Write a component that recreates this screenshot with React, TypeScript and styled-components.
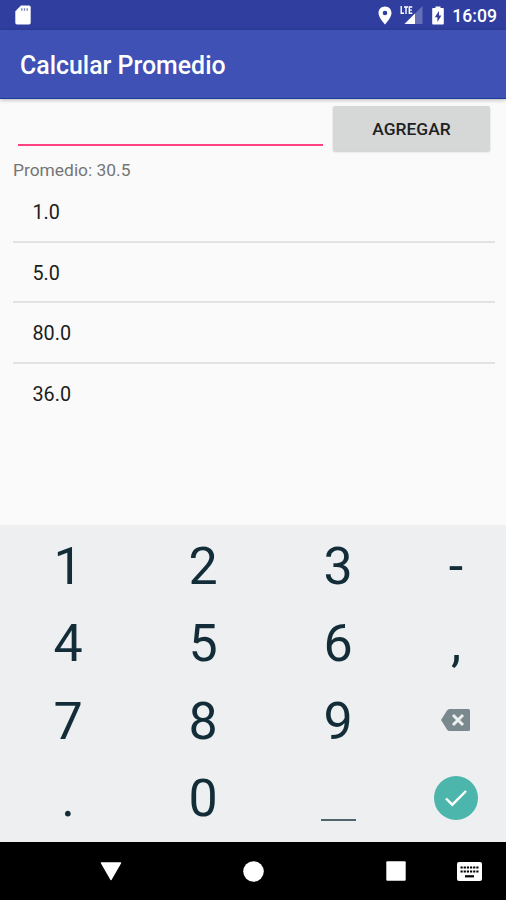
import React from "react";
import styled, { createGlobalStyle } from "styled-components";

const GlobalStyle = createGlobalStyle`
  * { box-sizing: border-box; }
  html, body { margin: 0; padding: 0; }
  body { font-family: Roboto, "Noto Sans", sans-serif; background: #fafafa; overflow: hidden; }
  button, input { font-family: inherit; border: 0; padding: 0; margin: 0; background: none; outline: none; }
`;

const Screen = styled.div`
  width: 506px;
  height: 900px;
  display: flex;
  flex-direction: column;
  background: #fafafa;
  overflow: hidden;
`;

const StatusBar = styled.header`
  height: 30px;
  flex: none;
  display: flex;
  align-items: center;
  padding: 0 9px 0 15px;
  background: #303f9f;
  color: #fff;
`;

const StatusIcons = styled.div`
  margin-left: auto;
  display: flex;
  align-items: center;
`;

const StatusIcon = styled.svg<{ $gap?: number }>`
  display: block;
  flex: none;
  margin-right: ${(p) => p.$gap ?? 0}px;
`;

const Clock = styled.span`
  font-size: 17.6px;
  line-height: 30px;
  font-weight: 500;
  padding-top: 2px;
`;

const AppBar = styled.div`
  height: 69px;
  flex: none;
  display: flex;
  align-items: center;
  padding: 4px 20px 0;
  background: #3f51b5;
  border-bottom: 1px solid #1b3a9c;
  box-shadow: 0 1px 4px rgba(0, 0, 0, 0.28);
`;

const Title = styled.h1`
  margin: 0;
  font-size: 24.9px;
  line-height: 32px;
  font-weight: 500;
  color: #fff;
`;

const Content = styled.main`
  flex: 1;
  min-height: 0;
  padding: 0 11px 0 13px;
`;

const EntryRow = styled.form`
  display: flex;
  height: 60px;
  padding: 7px 5px 0 4.5px;
`;

const NumberInput = styled.input`
  width: 305px;
  height: 40px;
  margin-right: 10.5px;
  border-bottom: 2px solid #ff4081;
  font-size: 22px;
`;

const AddButton = styled.button`
  width: 157px;
  height: 44.5px;
  padding-top: 1px;
  border-radius: 2px;
  background: #d6d7d7;
  color: #212121;
  font-size: 17.4px;
  font-weight: 500;
  box-shadow: 0 1px 2px rgba(0, 0, 0, 0.2);
`;

const Average = styled.p`
  margin: 0;
  height: 23px;
  font-size: 17.4px;
  line-height: 22px;
  color: #757575;
`;

const List = styled.ul`
  list-style: none;
  margin: 0;
  padding: 0;
`;

const ListItem = styled.li`
  height: 60.3px;
  padding-left: 19.5px;
  font-size: 19.8px;
  line-height: 61.5px;
  color: #1c1c1c;

  &:first-child {
    height: 59px;
    line-height: 61px;
  }

  & + & {
    border-top: 2px solid #e2e2e2;
  }
`;

const Keyboard = styled.section`
  height: 317px;
  flex: none;
  display: grid;
  grid-template-columns: 135px 135px 135px 101px;
  grid-template-rows: repeat(4, 77.3px);
  padding-top: 2px;
  background: #edeff1;
`;

const Key = styled.button`
  display: flex;
  align-items: center;
  justify-content: center;
  color: #132d38;
  font-size: 52px;
  line-height: 77px;
`;

const Glyph = styled.span`
  padding: 2px 0 0 1px;
`;

const SpaceMark = styled.span`
  width: 35px;
  height: 2px;
  margin: 45px 0 0 1px;
  background: #50656d;
`;

const Done = styled.span`
  display: flex;
  align-items: center;
  justify-content: center;
  width: 44px;
  height: 44px;
  border-radius: 50%;
  background: #4db6ac;
`;

const NavBar = styled.nav`
  height: 58px;
  flex: none;
  display: grid;
  grid-template-columns: 182px 143px 132px 49px;
  align-items: center;
  background: #000;
`;

const NavButton = styled.button<{ $shift: number }>`
  display: flex;
  height: 58px;
  align-items: center;
  padding-left: ${(p) => p.$shift}px;
`;

const values = ["1.0", "5.0", "80.0", "36.0"];

const glyph = (k: string) => ({ id: k, face: <Glyph>{k}</Glyph> });

const keys: { id: string; face: React.ReactNode }[] = [
  ...["1", "2", "3", "-", "4", "5", "6", ",", "7", "8", "9"].map(glyph),
  {
    id: "delete",
    face: (
      <svg width="29" height="22" viewBox="0 0 29 22">
        <path d="M8.5 0H27.500q1.500 0 1.500 1.500v19q0 1.500-1.500 1.500H8.5Q7 22 6 20.500L0 11 6 1.500Q7 0 8.500 0Z" fill="#7a898d" />
        <path d="M12 6l10 10m0-10l-10 10" stroke="#edeff1" strokeWidth="3" />
      </svg>
    ),
  },
  glyph("."),
  glyph("0"),
  { id: "space", face: <SpaceMark /> },
  {
    id: "done",
    face: (
      <Done>
        <svg width="24" height="18" viewBox="0 0 24 18">
          <path d="M2 9.500l6.300 6.200L22 2" fill="none" stroke="#fff" strokeWidth="2.400" />
        </svg>
      </Done>
    ),
  },
];

export default function App() {
  return (
    <>
      <GlobalStyle />
      <Screen>
        <StatusBar>
          <StatusIcon width="16" height="20" viewBox="0 0 16 20">
            <path d="M6 0.500h8q1.700 0 1.700 1.700v15.600q0 1.700-1.700 1.700H2q-1.700 0-1.700-1.700V6.200Z" fill="#fff" />
            <path d="M6.800 3.300v2.400M9.500 3.300v2.400M12.200 3.300v2.400" stroke="#7680bd" strokeWidth="1.300" />
          </StatusIcon>
          <StatusIcons>
            <StatusIcon $gap={8} width="14" height="19" viewBox="0 0 14 19">
              <path
                d="M7 .5C3.300 .5.500 3.300.500 7c0 4.700 6.500 11.500 6.500 11.500S13.500 11.700 13.500 7C13.500 3.300 10.700.500 7 .5Zm0 4.200a2.300 2.300 0 1 1 0 4.600 2.300 2.300 0 0 1 0-4.600Z"
                fill="#fff"
                fillRule="evenodd"
              />
            </StatusIcon>
            <StatusIcon $gap={9} width="23" height="20" viewBox="0 0 23 20">
              <path d="M22.500 1v18H4.500Z" fill="#6570b8" />
              <path d="M15 8.500V19H4.500Z" fill="#fff" />
              <path d="M1.200 1v7.300H4M4 2h4M6 2v7M12.300 2H9.300v6.300h3M9.300 5.100h2.600" fill="none" stroke="#fff" strokeWidth="1.400" />
            </StatusIcon>
            <StatusIcon $gap={8} width="12" height="19" viewBox="0 0 12 19">
              <path
                d="M3.500 2V.5h5V2H11q.8 0 .8.800v14.900q0 .8-.8.800H1q-.8 0-.8-.8V2.800Q.200 2 1 2ZM7 5L2.800 11.300h2.600V16l4-6.500H7Z"
                fill="#fff"
                fillRule="evenodd"
              />
            </StatusIcon>
            <Clock>16:09</Clock>
          </StatusIcons>
        </StatusBar>
        <AppBar>
          <Title>Calcular Promedio</Title>
        </AppBar>
        <Content>
          <EntryRow>
            <NumberInput aria-label="Número" inputMode="decimal" />
            <AddButton type="button">AGREGAR</AddButton>
          </EntryRow>
          <Average>Promedio: 30.5</Average>
          <List>
            {values.map((v) => (
              <ListItem key={v}>{v}</ListItem>
            ))}
          </List>
        </Content>
        <Keyboard>
          {keys.map((k) => (
            <Key key={k.id} aria-label={k.id}>
              {k.face}
            </Key>
          ))}
        </Keyboard>
        <NavBar>
          <NavButton $shift={100} aria-label="back">
            <svg width="22" height="19" viewBox="0 0 22 19">
              <path d="M1.500 1h19L11 17.500Z" fill="#fff" stroke="#fff" strokeWidth="1.500" strokeLinejoin="round" />
            </svg>
          </NavButton>
          <NavButton $shift={61} aria-label="home">
            <svg width="21" height="21" viewBox="0 0 21 21">
              <circle cx="10.500" cy="10.500" r="10.300" fill="#fff" />
            </svg>
          </NavButton>
          <NavButton $shift={61} aria-label="recent">
            <svg width="20" height="20" viewBox="0 0 20 20">
              <rect x=".3" y=".3" width="19.400" height="19.400" rx="1" fill="#fff" />
            </svg>
          </NavButton>
          <NavButton $shift={0} aria-label="keyboard">
            <svg width="25" height="19" viewBox="0 0 25 19">
              <rect width="25" height="19" rx="2" fill="#fff" />
              <path d="M3.500 5.500h18M3.500 9.500h18" stroke="#000" strokeWidth="2.200" strokeDasharray="2.200 .96" />
              <path d="M8 14.300h9" stroke="#000" strokeWidth="2.200" />
            </svg>
          </NavButton>
        </NavBar>
      </Screen>
    </>
  );
}
